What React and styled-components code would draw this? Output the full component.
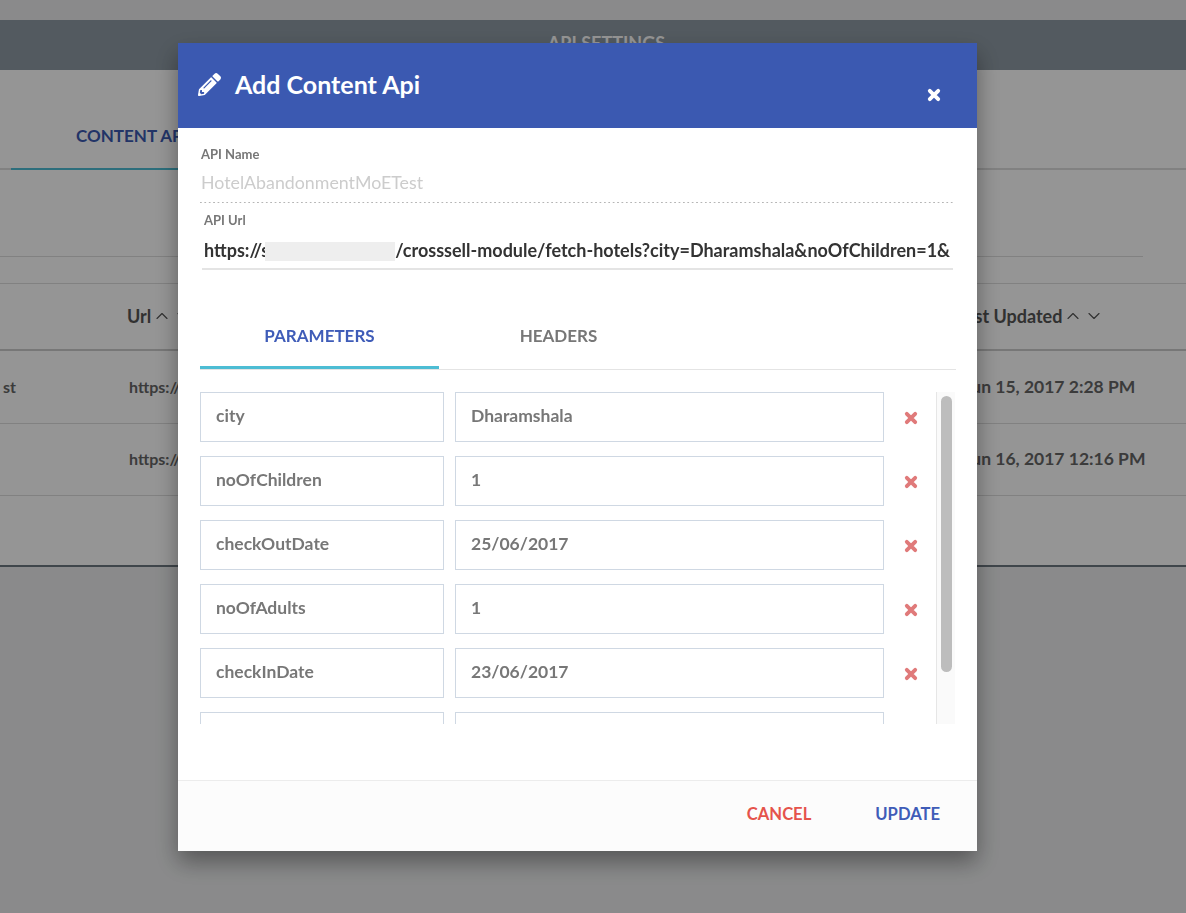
import React from "react";
import styled, { createGlobalStyle } from "styled-components";
import { FaPencilAlt } from "react-icons/fa";
import { ChevronUp, ChevronDown } from "lucide-react";

const Global = createGlobalStyle`
  html, body { margin: 0; padding: 0; background: #ecedee; }
  * { box-sizing: border-box; }
  body { font-family: "Lato", "Noto Sans", sans-serif; overflow: hidden; }
`;

const Page = styled.div`
  width: 1186px;
  height: 913px;
  padding-top: 20px;
  overflow: hidden;
`;
const TopBar = styled.div`
  height: 50px;
  background: #8e9aa4;
  color: #fff;
  text-align: center;
  padding-left: 27px;
  font-size: 18px;
  font-weight: 700;
  line-height: 46px;
`;
const Content = styled.div`
  background: #fff;
  height: 497px;
  border-bottom: 2px solid #6d7880;
`;
const PageTabs = styled.div`
  height: 100px;
  border-bottom: 2px solid #ddd;
  display: flex;
  align-items: flex-end;
`;
const PageTab = styled.div`
  margin-left: 11px;
  width: 240px;
  height: 100px;
  padding: 55px 0 0 65px;
  font-size: 17px;
  font-weight: 700;
  color: #3b59b1;
  border-bottom: 2px solid #4dbdd4;
  margin-bottom: -2px;
  white-space: nowrap;
`;
const Toolbar = styled.div`
  width: 1143px;
  height: 87px;
  border-bottom: 1px solid #ddd;
`;
const Spacer = styled.div`
  height: 27px;
  border-bottom: 1px solid #ddd;
`;
const HeadRow = styled.div`
  height: 67px;
  padding-bottom: 2px;
  border-bottom: 2px solid #ccc;
  display: grid;
  grid-template-columns: 127px 829px 1fr;
  align-items: center;
  font-size: 18px;
  font-weight: 700;
  color: #555;
`;
const Row = styled.div`
  height: ${(p) => p.$h}px;
  padding-bottom: 2px;
  border-bottom: 1px solid #ddd;
  display: grid;
  grid-template-columns: 129px 835px 1fr;
  align-items: center;
  font-size: 16px;
  font-weight: 700;
  color: #666;
  white-space: nowrap;
`;
const NameCell = styled.div`
  width: 16px;
  display: flex;
  justify-content: flex-end;
`;
const DateCell = styled.span`
  font-size: 17.5px;
`;
const Sort = styled.span`
  display: inline-flex;
  align-items: center;
  gap: 1px;
  svg { width: 20px; height: 20px; stroke-width: 1.4; color: #555; }
`;

const Overlay = styled.div`
  position: fixed;
  inset: 0;
  background: rgba(0, 0, 0, 0.415);
  padding: 43px 0 0 178px;
`;
const Modal = styled.div`
  width: 799px;
  height: 808px;
  background: #fff;
  box-shadow: 0 11px 22px rgba(0, 0, 0, 0.38);
  display: flex;
  flex-direction: column;
`;
const ModalHead = styled.div`
  height: 85px;
  flex: none;
  background: #3b59b1;
  color: #fff;
  display: flex;
  align-items: flex-start;
  padding: 25px 36px 0 20px;
`;
const Title = styled.h2`
  margin: 0 0 0 14px;
  font-size: 25px;
  line-height: 32px;
  font-weight: 700;
  flex: 1;
  white-space: nowrap;
`;
const PencilWrap = styled.span`
  display: flex;
  margin-top: 5px;
  font-size: 23px;
`;
const CrossIcon = styled.svg.attrs({ viewBox: "0 0 16 16" })`
  width: ${(p) => p.$size}px;
  height: ${(p) => p.$size}px;
  display: block;
  path {
    fill: none;
    stroke: currentColor;
    stroke-width: 4.4;
    stroke-linecap: round;
  }
`;
const CloseWrap = styled.span`
  display: flex;
  margin-top: 20px;
`;
const Body = styled.div`
  flex: 1;
  padding: 0 21px 0 22px;
  min-height: 0;
  display: flex;
  flex-direction: column;
`;
const Label = styled.div`
  font-size: 13px;
  line-height: 14px;
  font-weight: 700;
  color: #777;
  padding-left: ${(p) => p.$indent || 1}px;
`;
const NameField = styled.div`
  padding-top: 19px;
  height: 75px;
  margin-right: 3px;
  background: linear-gradient(to right, #b5b5b5 1.5px, transparent 1.5px) left bottom / 4.4px 1.5px repeat-x;
`;
const NameValue = styled.div`
  font-size: 17.8px;
  line-height: 24px;
  margin-top: 9px;
  padding-left: 1px;
  color: #ccc;
  font-weight: 400;
  white-space: nowrap;
`;
const UrlField = styled.div`
  padding-top: 10px;
  height: 67px;
  border-bottom: 2px solid #e4e4e4;
  margin: 0 3px 0 2px;
`;
const UrlValue = styled.div`
  font-size: 18px;
  line-height: 22px;
  margin-top: 12px;
  padding-left: 2px;
  font-weight: 700;
  color: #333;
  white-space: nowrap;
`;
const Redact = styled.span`
  display: inline-block;
  vertical-align: -4px;
  margin-left: -4px;
  width: 130px;
  height: 19px;
  background: #eee;
`;
const Tabs = styled.div`
  margin-top: 32px;
  height: 68px;
  display: flex;
  border-bottom: 1px solid #e4e4e4;
`;
const Tab = styled.div`
  width: 239px;
  height: 67px;
  text-align: center;
  padding-top: 22px;
  font-size: 17px;
  line-height: 24px;
  font-weight: 700;
  color: ${(p) => (p.$active ? "#3f5cb8" : "#777")};
  border-bottom: ${(p) => (p.$active ? "3px solid #4dbdd4" : "none")};
`;
const ParamArea = styled.div`
  margin-top: 22px;
  height: 332px;
  overflow: hidden;
  display: flex;
  justify-content: space-between;
`;
const ParamList = styled.div`
  display: flex;
  flex-direction: column;
  gap: 14px;
`;
const ParamRow = styled.div`
  display: flex;
  align-items: center;
  flex: none;
`;
const ParamBox = styled.div`
  width: ${(p) => p.$w}px;
  height: 50px;
  margin-right: 11px;
  border: 1px solid #cfd8e3;
  padding: 0 15px;
  font-size: 17.5px;
  line-height: 46px;
  font-weight: 700;
  color: #777;
`;
const Remove = styled.span`
  display: flex;
  margin: 2px 0 0 9px;
  color: #e07a7a;
`;
const Track = styled.div`
  width: 19px;
  height: 100%;
  margin-right: 1px;
  background: #fafafa;
  border-left: 1px solid #e6e6e6;
  padding: 4px 3px 0 4px;
`;
const Thumb = styled.div`
  width: 11px;
  height: 276px;
  border-radius: 6px;
  background: #bdbdbd;
`;
const Footer = styled.div`
  height: 71px;
  flex: none;
  background: #fcfcfc;
  border-top: 1px solid #ececec;
  display: flex;
  justify-content: flex-end;
  gap: 64px;
  padding: 22px 37px 0 0;
`;
const Action = styled.span`
  font-size: 16.6px;
  line-height: 22px;
  font-weight: 700;
  color: ${(p) => p.$color};
`;

const params = [
  ["city", "Dharamshala"],
  ["noOfChildren", "1"],
  ["checkOutDate", "25/06/2017"],
  ["noOfAdults", "1"],
  ["checkInDate", "23/06/2017"],
  ["", ""],
];

const Cross = ({ size }) => (
  <CrossIcon $size={size}>
    <path d="M3.2 3.2 12.8 12.8M12.8 3.2 3.2 12.8" />
  </CrossIcon>
);

export default function App() {
  return (
    <>
      <Global />
      <Page>
        <TopBar>API SETTINGS</TopBar>
        <Content>
          <PageTabs>
            <PageTab>CONTENT API</PageTab>
          </PageTabs>
          <Toolbar />
          <Spacer />
          <HeadRow>
            <span />
            <Sort>
              Url <ChevronUp /> <ChevronDown />
            </Sort>
            <Sort>
              Last Updated <ChevronUp /> <ChevronDown />
            </Sort>
          </HeadRow>
          <Row $h={73}>
            <NameCell>st</NameCell>
            <span>https://</span>
            <DateCell>Jun 15, 2017 2:28 PM</DateCell>
          </Row>
          <Row $h={72}>
            <span />
            <span>https://</span>
            <DateCell>Jun 16, 2017 12:16 PM</DateCell>
          </Row>
        </Content>
      </Page>
      <Overlay>
        <Modal>
          <ModalHead>
            <PencilWrap>
              <FaPencilAlt />
            </PencilWrap>
            <Title>Add Content Api</Title>
            <CloseWrap>
              <Cross size={14} />
            </CloseWrap>
          </ModalHead>
          <Body>
            <NameField>
              <Label>API Name</Label>
              <NameValue>HotelAbandonmentMoETest</NameValue>
            </NameField>
            <UrlField>
              <Label $indent={2}>API Url</Label>
              <UrlValue>
                https://s<Redact />/crosssell-module/fetch-hotels?city=Dharamshala&amp;noOfChildren=1&amp;
              </UrlValue>
            </UrlField>
            <Tabs>
              <Tab $active>PARAMETERS</Tab>
              <Tab>HEADERS</Tab>
            </Tabs>
            <ParamArea>
              <ParamList>
                {params.map(([k, v], i) => (
                  <ParamRow key={i}>
                    <ParamBox $w={244}>{k}</ParamBox>
                    <ParamBox $w={429}>{v}</ParamBox>
                    {k && (
                      <Remove>
                        <Cross size={14} />
                      </Remove>
                    )}
                  </ParamRow>
                ))}
              </ParamList>
              <Track>
                <Thumb />
              </Track>
            </ParamArea>
          </Body>
          <Footer>
            <Action $color="#e5534b">CANCEL</Action>
            <Action $color="#3f5cb8">UPDATE</Action>
          </Footer>
        </Modal>
      </Overlay>
    </>
  );
}
